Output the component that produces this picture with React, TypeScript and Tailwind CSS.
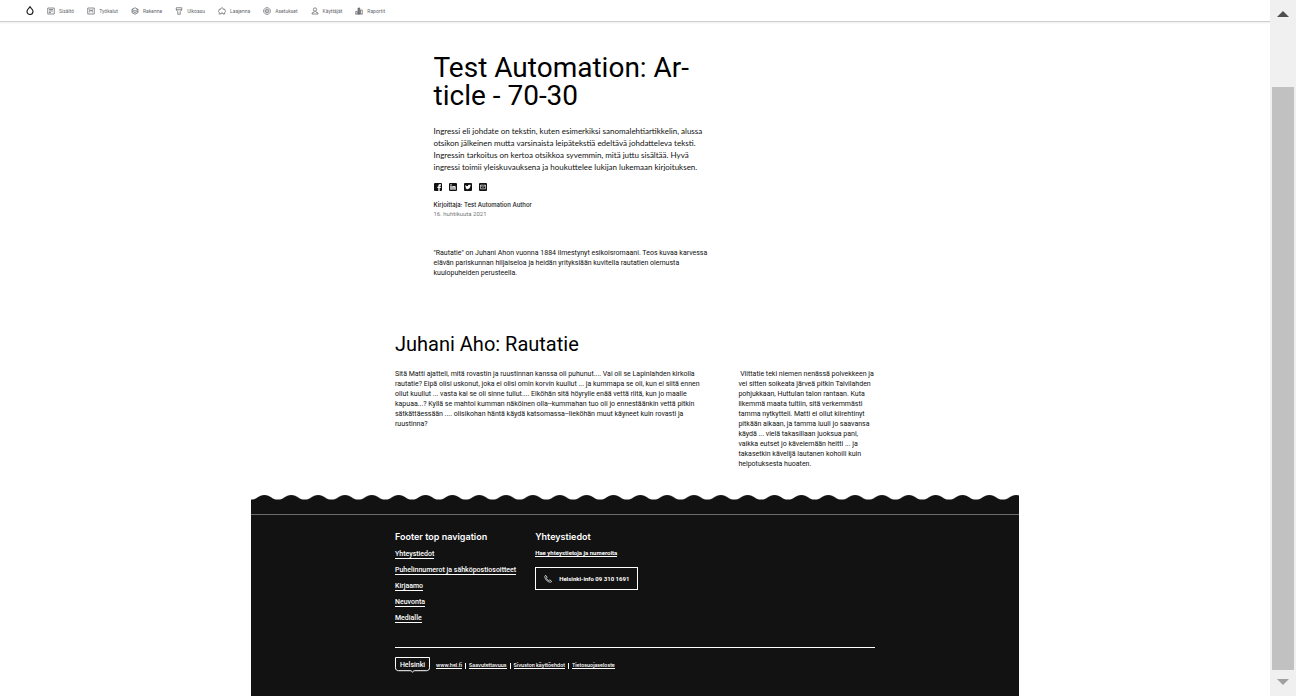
import React from "react";

type IconName =
  | "content"
  | "tools"
  | "structure"
  | "appearance"
  | "extend"
  | "settings"
  | "people"
  | "reports";

const menu: { label: string; icon: IconName }[] = [
  { label: "Sisältö", icon: "content" },
  { label: "Työkalut", icon: "tools" },
  { label: "Rakenne", icon: "structure" },
  { label: "Ulkoasu", icon: "appearance" },
  { label: "Laajenna", icon: "extend" },
  { label: "Asetukset", icon: "settings" },
  { label: "Käyttäjät", icon: "people" },
  { label: "Raportit", icon: "reports" },
];

const iconShapes: Record<IconName, React.ReactNode> = {
  content: <path d="M1.500 2h13v12h-13zM4 5h8M4 8h8M4 11h4" />,
  tools: <path d="M1.500 2h13v12h-13zM5.500 11V5l2.500 3 2.500-3v6" />,
  structure: (
    <path d="M8 1.500l6 3.200v6.600L8 14.500l-6-3.200V4.700zM2 4.700L8 8l6-3.300M2 8l6 3.300L14 8" />
  ),
  appearance: <path d="M2.500 1.500h11v4.500L10.500 9v5.500h-5V9L2.500 6zM2.500 5.500h11" />,
  extend: (
    <path d="M2.500 14V10.500c-2-1-2-3.500 0-4V4.500h3c0-4 5-4 5 0h3v2c2 .5 2 3 0 4V14H10v-2H6v2z" />
  ),
  settings: (
    <>
      <path d="M5.500 1.500h5l4 4v5l-4 4h-5l-4-4v-5z" />
      <circle cx="8" cy="8" r="3.600" />
      <circle cx="8" cy="8" r="0.800" />
    </>
  ),
  people: (
    <>
      <circle cx="8" cy="5" r="3.300" />
      <path d="M6.500 8.500v1.500L2 12v2h12v-2l-4.500-2V8.500" />
    </>
  ),
  reports: (
    <>
      <path d="M1.500 14V9h3v5M11 14V6h3.500v8M0.500 14.200h15" />
      <path d="M6 14V2h3.500v12z" fill="#77787c" />
    </>
  ),
};

function MenuIcon({ name }: { name: IconName }) {
  return (
    <svg
      viewBox="0 0 16 16"
      className="size-[8px] shrink-0"
      fill="none"
      stroke="#66676c"
      strokeWidth="1.500"
      aria-hidden="true"
    >
      {iconShapes[name]}
    </svg>
  );
}

const share: { label: string; glyph: React.ReactNode }[] = [
  {
    label: "Facebook",
    glyph: (
      <path
        d="M13 24v-9h-3v-4h3V8.500C13 5.500 14.500 4 17 4h4v4h-2c-1.500 0-2 .5-2 1.500V11h4l-.5 4H17v9z"
        fill="#fff"
      />
    ),
  },
  {
    label: "LinkedIn",
    glyph: (
      <path
        d="M4 9h4v11H4zM4 4h4v3.500H4zM10 9h4v1.500C15 9 20 7.500 20 13v7h-4v-6.500c0-2-2-2-2 0V20h-4z"
        fill="#fff"
      />
    ),
  },
  {
    label: "Twitter",
    glyph: (
      <path
        d="M4 6c2 2.500 4.500 3.500 8 3.500C11.500 6 15 4 17.500 6l3-.5-1.500 3.500C19 16 12 21 4 17.500c2 0 3-.5 4-1.500-3-1-4-4-4-10z"
        fill="#fff"
      />
    ),
  },
  {
    label: "Sähköposti",
    glyph: (
      <path
        d="M4.500 6.500h15v11h-15zM4.500 7l7.500 6 7.500-6"
        fill="none"
        stroke="#fff"
        strokeWidth="1.800"
      />
    ),
  },
];

const footerLinks = [
  "Yhteystiedot",
  "Puhelinnumerot ja sähköpostiosoitteet",
  "Kirjaamo",
  "Neuvonta",
  "Medialle",
];

const legalLinks = [
  "www.hel.fi",
  "Saavutettavuus",
  "Sivuston käyttöehdot",
  "Tietosuojaseloste",
];

const lead = [
  "Ingressi eli johdate on tekstin, kuten esimerkiksi sanomalehtiartikkelin, alussa",
  "otsikon jälkeinen mutta varsinaista leipätekstiä edeltävä johdatteleva teksti.",
  "Ingressin tarkoitus on kertoa otsikkoa syvemmin, mitä juttu sisältää. Hyvä",
  "ingressi toimii yleiskuvauksena ja houkuttelee lukijan lukemaan kirjoituksen.",
];

const intro = [
  "\"Rautatie\" on Juhani Ahon vuonna 1884 ilmestynyt esikoisromaani. Teos kuvaa karvessa",
  "elävän pariskunnan hiljaiseloa ja heidän yrityksiään kuvitella rautatien olemusta",
  "kuulopuheiden perusteella.",
];

const leftColumn = [
  "Sitä Matti ajatteli, mitä rovastin ja ruustinnan kanssa oli puhunut.... Vai oli se Lapinlahden kirkolla",
  "rautatie? Eipä olisi uskonut, joka ei olisi omin korvin kuullut ... ja kummapa se oli, kun ei siitä ennen",
  "ollut kuullut ... vasta kai se oli sinne tullut.... Eiköhän sitä höyrylle enää vettä riitä, kun jo maalle",
  "kapuaa...? Kyllä se mahtoi kumman näköinen olla--kummahan tuo oli jo ennestäänkin vettä pitkin",
  "sätkättäessään .... olisikohan häntä käydä katsomassa--lieköhän muut käyneet kuin rovasti ja",
  "ruustinna?",
];

const rightColumn = [
  "\u00a0Viittatie teki niemen nenässä polvekkeen ja",
  "vei sitten soikeata järveä pitkin Talvilahden",
  "pohjukkaan, Huttulan talon rantaan. Kuta",
  "likemmä maata tultiin, sitä verkemmästi",
  "tamma nytkytteli. Matti ei ollut kiirehtinyt",
  "pitkään aikaan, ja tamma luuli jo saavansa",
  "käydä ... vielä takasillaan juoksua pani,",
  "vaikka eutset jo kävelemään heitti ... ja",
  "takasetkin kävelijä lautanen kohoili kuin",
  "helpotuksesta huoaten.",
];

function Lines({ lines, className }: { lines: string[]; className: string }) {
  return (
    <p className={className}>
      {lines.map((line) => (
        <span key={line} className="block whitespace-nowrap">
          {line}
        </span>
      ))}
    </p>
  );
}

function Toolbar() {
  return (
    <header className="flex h-[22px] items-center border-b border-[#cfcfcf] bg-white pl-[26px] shadow-[0_1px_2px_rgba(0,0,0,0.08)]">
      <a href="#" aria-label="Etusivu" className="mr-[13px] block">
        <svg
          viewBox="0 0 16 18"
          className="h-[9px] w-[8px]"
          fill="none"
          stroke="#232429"
          strokeWidth="2.400"
          aria-hidden="true"
        >
          <path d="M8 1.500C9 4 14 6.500 14 11a6 6 0 0 1-12 0C2 6.500 7 4 8 1.500z" />
        </svg>
      </a>
      <nav className="flex gap-[13px]">
        {menu.map((item) => (
          <a
            key={item.label}
            href="#"
            className="flex items-center gap-1 text-[5px] leading-[8px] text-[#66676c]"
          >
            <MenuIcon name={item.icon} />
            {item.label}
          </a>
        ))}
      </nav>
    </header>
  );
}

function Hero() {
  return (
    <section className="mx-auto max-w-[403px] pt-8">
      <h1 className="text-[28px] leading-[28px] text-black">
        <span className="block">Test Automation: Ar-</span>
        <span className="block">ticle - 70-30</span>
      </h1>
      <Lines
        lines={lead}
        className="mt-[15px] font-['Lato',sans-serif] text-[8px] leading-[12px]"
      />
      <ul className="mt-2.5 flex gap-[7px]">
        {share.map((item) => (
          <li key={item.label}>
            <a href="#" aria-label={item.label} className="block">
              <svg viewBox="0 0 24 24" className="size-[8px]" aria-hidden="true">
                <rect width="24" height="24" rx="3" fill="#111" />
                {item.glyph}
              </svg>
            </a>
          </li>
        ))}
      </ul>
      <p className="mt-[9px] font-['Inter',sans-serif] text-[6px] leading-[9px] font-medium">
        Kirjoittaja: Test Automation Author
      </p>
      <p className="text-[6px] leading-[9px] text-[#777]">16. huhtikuuta 2021</p>
      <Lines lines={intro} className="mt-[30px] text-[7px] leading-[10px]" />
    </section>
  );
}

function Columns() {
  return (
    <section className="mx-auto max-w-[480px] pt-[54px] pb-[26px]">
      <h2 className="text-[20px] leading-[24px] text-black">Juhani Aho: Rautatie</h2>
      <div className="mt-[13px] grid grid-cols-[5fr_2fr] gap-[2px]">
        <Lines lines={leftColumn} className="text-[7px] leading-[10px]" />
        <Lines lines={rightColumn} className="text-[7px] leading-[10px]" />
      </div>
    </section>
  );
}

function Wave() {
  return (
    <svg className="block h-[5px] w-full" aria-hidden="true">
      <defs>
        <pattern id="wave" width="26.850" height="5" patternUnits="userSpaceOnUse">
          <path
            d="M0 4.600C6.200 4.600 7.200 0 13.425 0S20.650 4.600 26.850 4.600V5H0z"
            fill="#121212"
          />
        </pattern>
      </defs>
      <rect width="100%" height="5" fill="url(#wave)" />
    </svg>
  );
}

function Footer() {
  return (
    <footer className="mx-auto flex w-full max-w-[768px] grow flex-col">
      <Wave />
      <div className="grow bg-[#121212] pt-3.5 text-white">
        <div className="border-t border-[#6b6b6b] pt-4">
          <div className="mx-auto max-w-[480px]">
            <div className="flex gap-[19px]">
              <nav aria-labelledby="footer-nav">
                <h2
                  id="footer-nav"
                  className="font-['Inter',sans-serif] text-[9px] leading-[12px] font-semibold"
                >
                  Footer top navigation
                </h2>
                <ul className="mt-2 flex flex-col gap-2">
                  {footerLinks.map((label) => (
                    <li key={label} className="flex">
                      <a
                        href="#"
                        className="border-b border-white text-[7px] leading-[7px] font-medium whitespace-nowrap"
                      >
                        {label}
                      </a>
                    </li>
                  ))}
                </ul>
              </nav>
              <section>
                <h2 className="font-['Inter',sans-serif] text-[9px] leading-[12px] font-semibold">
                  Yhteystiedot
                </h2>
                <p className="mt-[7px] flex">
                  <a
                    href="#"
                    className="border-b border-white text-[6px] leading-[6px] font-bold"
                  >
                    Hae yhteystietoja ja numeroita
                  </a>
                </p>
                <a
                  href="tel:+358931001691"
                  className="mt-2.5 flex h-[23px] items-center gap-[7px] border border-white px-2 text-[6px] font-bold whitespace-nowrap"
                >
                  <svg
                    viewBox="0 0 16 16"
                    className="size-[8px]"
                    fill="none"
                    stroke="#fff"
                    strokeWidth="1.500"
                    aria-hidden="true"
                  >
                    <path d="M1.500 3C1 2 3 .5 4 1.200l2.200 3.300-1.500 2c1 2 2.800 3.800 4.800 4.800l2-1.500 3.300 2.200c.8 1-.8 3-1.800 2.500C7 14 2 9 1.500 3z" />
                  </svg>
                  Helsinki-info 09 310 1691
                </a>
              </section>
            </div>
            <div className="mt-6 flex items-center border-t border-white pt-[9px]">
              <a href="#" className="relative block h-[17px] w-[35px]">
                <svg
                  viewBox="0 0 35 17"
                  className="block h-full w-full"
                  fill="none"
                  stroke="#fff"
                  aria-hidden="true"
                >
                  <path d="M.5.5h34v10.200c0 2-1.200 3-3 3H20c-1.200 0-2 .5-2.500 1.600-.5-1.100-1.300-1.600-2.500-1.600H3.500c-1.800 0-3-1-3-3z" />
                </svg>
                <span className="absolute inset-x-0 top-[4px] text-center text-[7px] leading-[8px] font-medium">
                  Helsinki
                </span>
              </a>
              <ul className="ml-1.5 flex items-center">
                {legalLinks.map((label, index) => (
                  <li key={label} className="flex items-center">
                    {index > 0 && <span className="mx-[3px] h-[6px] w-px bg-white" />}
                    <a
                      href="#"
                      className="border-b border-white font-['Inter',sans-serif] text-[5px] leading-[6px] font-semibold whitespace-nowrap"
                    >
                      {label}
                    </a>
                  </li>
                ))}
              </ul>
            </div>
          </div>
        </div>
      </div>
    </footer>
  );
}

function ScrollBar() {
  return (
    <aside
      aria-hidden="true"
      className="flex w-[26px] shrink-0 flex-col items-center bg-[#f0f0f0]"
    >
      <svg viewBox="0 0 26 26" className="size-[26px]">
        <path d="M7 17h12l-6-6z" fill="#505050" />
      </svg>
      <div className="mt-[61px] w-[22px] grow bg-[#c1c1c1]" />
      <svg viewBox="0 0 26 26" className="size-[26px]">
        <path d="M7 9h12l-6 6z" fill="#a0a0a0" />
      </svg>
    </aside>
  );
}

export default function App() {
  return (
    <div className="flex min-h-screen bg-white font-['Roboto',sans-serif] text-[#111]">
      <div className="flex min-w-0 grow flex-col">
        <Toolbar />
        <main>
          <Hero />
          <Columns />
        </main>
        <Footer />
      </div>
      <ScrollBar />
    </div>
  );
}
